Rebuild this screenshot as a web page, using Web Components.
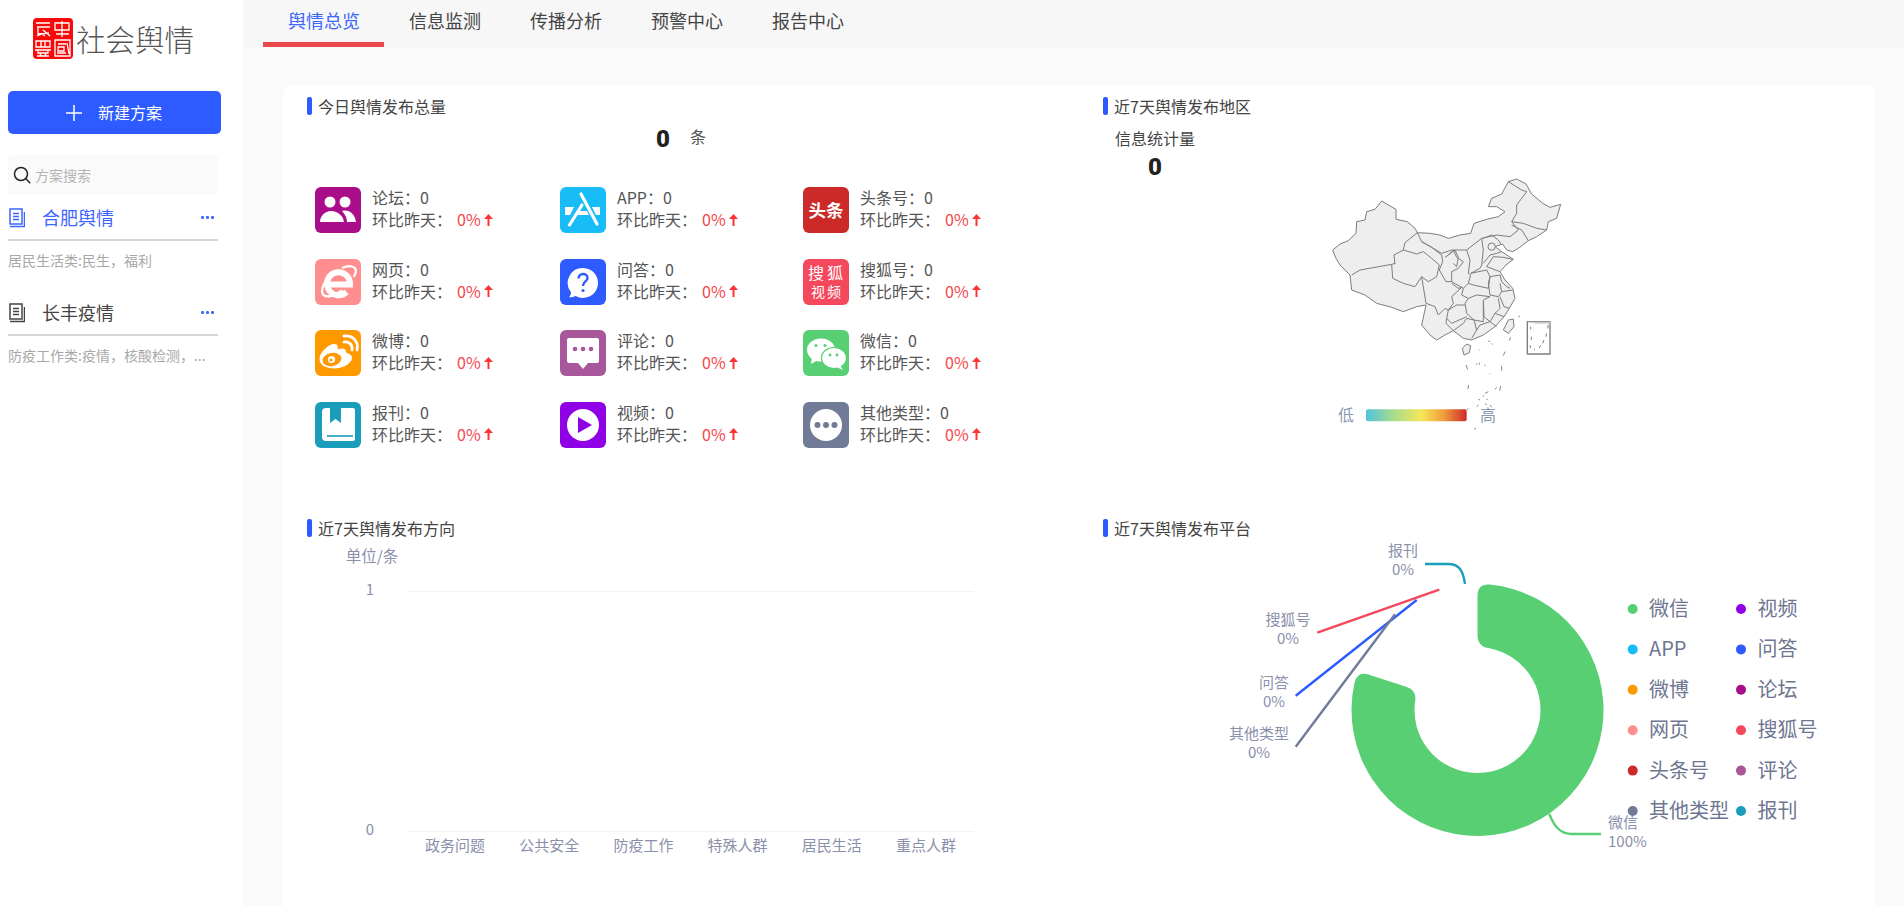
<!DOCTYPE html>
<html lang="zh-CN">
<head>
<meta charset="utf-8">
<title>社会舆情</title>
<style>
    html, body { margin: 0; height: 906px; overflow: hidden; background: #fafafa; }
    body { font-family: 'Noto Sans CJK SC', 'Noto Sans', sans-serif; color: #444; }
</style>
</head>
<body>
<opinion-app></opinion-app>

<script>
const ICONS = {
    forum: `<circle cx="15" cy="15" r="5.500" fill="#fff"/><circle cx="30" cy="15" r="5.500" fill="#fff"/><path d="M5 35c0-6 5-11 11-11s12 4 13 11z" fill="#fff"/><path d="M27 24c7-2 13 3 14 11h-9c0-4-2-8-5-11z" fill="#fff"/>`,
    app: `<path d="M5 20h9l-4 8H5zM32 20h8v8h-4zM18 24h9l2 4H16z" fill="#fff"/><path d="M21 7l16 30M22 18L9.500 38" fill="none" stroke="#fff" stroke-width="3.200" stroke-linecap="round"/>`,
    toutiao: `<text x="23" y="29.500" text-anchor="middle" font-size="17.500" font-weight="700" fill="#fff">头条</text>`,
    web: `<path d="M13 25.500H35A11.500 11.500 0 1 0 31.500 33" fill="none" stroke="#fff" stroke-width="6"/><path d="M17 14C10 20 5 31 8 35.500c3 4 12 1 19-4M27 9c7-3 12-2 13.500 1 1 2.500 0 5-2 8" fill="none" stroke="#fff" stroke-width="2.200"/>`,
    qa: `<path d="M23 9a15 15 0 1 1-7.500 28c-2 1-4 1.500-6.500 1.300 1.200-1.300 2-2.800 2-5A15 15 0 0 1 23 9z" fill="#fff"/><path d="M18.500 19.500c0-6 9-6 9-.5 0 3.500-4.500 3.500-4.500 8" fill="none" stroke="#2d5bff" stroke-width="2.400"/><circle cx="23" cy="31.500" r="1.600" fill="#2d5bff"/>`,
    sohu: `<text x="24" y="20" text-anchor="middle" font-size="16" letter-spacing="3" fill="#fff">搜狐</text><text x="24" y="38" text-anchor="middle" font-size="14" letter-spacing="2" fill="#fff">视频</text>`,
    weibo: `<path d="M4.500 29c0-7 9-15 15-15 3.500 0 3.500 3 3 5.500 5-2 9-1 8.500 3 4 1 6 3 6 5.500 0 5-9 10.500-17.500 10.500S4.500 35 4.500 29z" fill="#fff"/><ellipse cx="17" cy="29.500" rx="9.500" ry="6.500" fill="#ff9900" transform="rotate(-10 17 29.500)"/><circle cx="16.500" cy="29.500" r="3.600" fill="#fff"/><circle cx="16" cy="30" r="1.500" fill="#ff9900"/><path d="M29 12c5-1 9 3 8 8M29 6c9-1 15 6 13 14" fill="none" stroke="#fff" stroke-width="2.800" stroke-linecap="round"/>`,
    comment: `<path d="M9 8h28a2 2 0 0 1 2 2v21a2 2 0 0 1-2 2H28l-5 6-5-6H9a2 2 0 0 1-2-2V10a2 2 0 0 1 2-2z" fill="#fff"/><circle cx="15" cy="19" r="2.300" fill="#a9579b"/><circle cx="23" cy="19" r="2.300" fill="#a9579b"/><circle cx="31" cy="19" r="2.300" fill="#a9579b"/>`,
    wechat: `<ellipse cx="18" cy="20" rx="14" ry="11.500" fill="#fff"/><path d="M9 27l-1 7 7-4z" fill="#fff"/><ellipse cx="31" cy="28" rx="12.500" ry="10.500" fill="#fff" stroke="#58cf73" stroke-width="1.200"/><path d="M37 35l3 5-7-3z" fill="#fff"/><circle cx="13" cy="15.500" r="1.500" fill="#58cf73"/><circle cx="22" cy="15.500" r="1.500" fill="#58cf73"/><circle cx="27" cy="25" r="1.400" fill="#58cf73"/><circle cx="34" cy="25" r="1.400" fill="#58cf73"/>`,
    paper: `<path d="M11 6h27a2 2 0 0 1 2 2v29a2 2 0 0 1-2 2H11a4 4 0 0 1-4-4V10a4 4 0 0 1 4-4z" fill="#fff"/><path d="M15 6h11v15l-5.500-4-5.500 4z" fill="#1a9dbb"/><path d="M12 34h26" stroke="#1a9dbb" stroke-width="1.600"/>`,
    video: `<circle cx="23" cy="23" r="16" fill="#fff"/><path d="M18 15l14 8-14 8z" fill="#8f00e6"/>`,
    other: `<circle cx="23" cy="23" r="16" fill="#fff"/><circle cx="14.500" cy="23" r="3" fill="#717a96"/><circle cx="23" cy="23" r="3" fill="#717a96"/><circle cx="31.500" cy="23" r="3" fill="#717a96"/>`
};

class SideLogo extends HTMLElement {
    constructor() {
        super();
        this.attachShadow({ mode: 'open' });
        this.shadowRoot.innerHTML = `
            <style>
                :host { display: flex; align-items: center; padding: 18px 0 0 33px; height: 41px; }
                svg { flex: none; }
                span { margin-left: 3px; font-size: 29.500px; line-height: 41px; font-weight: 300; color: #555; white-space: nowrap; }
            </style>
            <svg width="40" height="41" viewBox="0 0 40 41">
                <rect width="40" height="41" rx="4" fill="#f80a0a"/>
                <g fill="none" stroke="#fff" stroke-width="1.300">
                    <path d="M3 5h14M4 9h13M5 9v7l11-1M4 18l5-2 3 2M10 12l7 6"/>
                    <path d="M22 5h14v7H22zM29 3v16M23 16h13"/>
                    <path d="M3 23h14v6H3zM8 23v6M12 23v6M2 32h16M5 32v3h10v-3M4 38h12M7 35l1 3M13 35l-1 3"/>
                    <path d="M22 22h15v16H22zM25 26h8M25 29h6v4h-6zM34 25l2 11M24 35h9"/>
                </g>
            </svg>
            <span>社会舆情</span>`;
    }
}

class NewPlanButton extends HTMLElement {
    constructor() {
        super();
        this.attachShadow({ mode: 'open' });
        this.shadowRoot.innerHTML = `
            <style>
                :host {
                    display: flex; align-items: center; box-sizing: border-box;
                    margin: 32px 22px 0 8px; height: 43px; padding-left: 58px;
                    background: #2d5bff; border-radius: 5px; color: #fff;
                    font-size: 16px; cursor: pointer;
                }
                svg { margin-right: 16px; }
                span { margin-top: -2px; }
            </style>
            <svg width="16" height="16" viewBox="0 0 16 16"><path d="M8 0v16M0 8h16" stroke="#fff" stroke-width="1.500"/></svg>
            <span>新建方案</span>`;
    }
}

class PlanSearch extends HTMLElement {
    constructor() {
        super();
        this.attachShadow({ mode: 'open' });
        this.shadowRoot.innerHTML = `
            <style>
                :host {
                    display: flex; align-items: center; box-sizing: border-box;
                    margin: 21px 25px 0 8px; height: 40px; padding-left: 5px;
                    background: #fafafa; border-radius: 4px;
                    font-size: 14px; color: #b5b5b5;
                }
                svg { margin-right: 4px; }
                span { margin-top: -1px; }
            </style>
            <svg width="18" height="18" viewBox="0 0 18 18" fill="none" stroke="#222" stroke-width="1.500">
                <circle cx="8" cy="8" r="6.500"/><path d="M12.800 12.800l4 4" stroke-linecap="round"/>
            </svg>
            <span>方案搜索</span>`;
    }
}

class PlanItem extends HTMLElement {
    constructor() {
        super();
        this.attachShadow({ mode: 'open' });
    }

    connectedCallback() {
        const name = this.getAttribute('name');
        const desc = this.getAttribute('desc');
        const color = this.hasAttribute('active') ? '#3d66ff' : '#444';
        this.shadowRoot.innerHTML = `
            <style>
                :host { display: block; margin: 0 25px 0 8px; }
                .head {
                    display: flex; align-items: center; height: 43px;
                    border-bottom: 2px solid #d6d6d6; box-sizing: content-box;
                    color: ${color}; font-size: 18px;
                }
                svg { flex: none; margin: 0 17px 0 1px; }
                .name { flex: 1; margin-top: -2px; }
                .more { width: 13px; margin-right: 4px; display: flex; gap: 2.500px; }
                .more i { width: 2.500px; height: 2.500px; background: #3d66ff; border-radius: 50%; }
                .desc { margin-top: 9px; height: 20px; line-height: 20px; font-size: 14px; color: #a8a8a8; white-space: nowrap; }
            </style>
            <div class="head">
                <svg width="16" height="20" viewBox="0 0 16 20" fill="none" stroke="${color}" stroke-width="1.500">
                    <path d="M1 1h12v15H1zM4 5.500h6M4 8.500h6M4 11.500h6M1 18.500h14.500V4"/>
                </svg>
                <span class="name">${name}</span>
                <span class="more"><i></i><i></i><i></i></span>
            </div>
            <div class="desc">${desc}</div>`;
    }
}

class SideBar extends HTMLElement {
    constructor() {
        super();
        this.attachShadow({ mode: 'open' });
        this.shadowRoot.innerHTML = `
            <style>
                :host {
                    display: block; flex: none; width: 243px; height: 906px;
                    background: #fff; box-shadow: 2px 0 6px rgba(0, 0, 0, .05);
                }
                .plans { margin-top: 1px; }
                plan-item + plan-item { margin-top: 21px; }
            </style>
            <side-logo></side-logo>
            <new-plan-button></new-plan-button>
            <plan-search></plan-search>
            <div class="plans">
                <plan-item active name="合肥舆情" desc="居民生活类:民生，福利"></plan-item>
                <plan-item name="长丰疫情" desc="防疫工作类:疫情，核酸检测，..."></plan-item>
            </div>`;
    }
}

class TopTabs extends HTMLElement {
    constructor() {
        super();
        this.attachShadow({ mode: 'open' });
        const tabs = ['舆情总览', '信息监测', '传播分析', '预警中心', '报告中心'];
        this.shadowRoot.innerHTML = `
            <style>
                :host { display: flex; height: 47px; padding-left: 20px; background: #f7f7f7; }
                div {
                    box-sizing: border-box; width: 121px; height: 47px; text-align: center;
                    font-size: 18px; line-height: 41px; color: #444; padding-left: 1px;
                }
                .on { color: #3d66ff; border-bottom: 5px solid #e9494d; line-height: 40px; padding-left: 1px; }
            </style>
            ${tabs.map((t, i) => `<div class="${i === 0 ? 'on' : ''}">${t}</div>`).join('')}`;
    }
}

class PanelBox extends HTMLElement {
    constructor() {
        super();
        this.attachShadow({ mode: 'open' });
    }

    connectedCallback() {
        this.shadowRoot.innerHTML = `
            <style>
                :host { display: block; box-sizing: border-box; height: 422px; padding-top: 12px; }
                .title {
                    display: flex; align-items: center; height: 18px; padding-left: 24px;
                    font-size: 16px; color: #444; white-space: nowrap;
                }
                .title i { width: 5px; height: 18px; margin-right: 6px; background: #2d5bff; border-radius: 2px; }
                .title span { margin-top: -1px; }
            </style>
            <div class="title"><i></i><span>${this.getAttribute('title')}</span></div>
            <slot></slot>`;
    }
}

class StatItem extends HTMLElement {
    constructor() {
        super();
        this.attachShadow({ mode: 'open' });
    }

    connectedCallback() {
        const icon = this.getAttribute('icon');
        this.shadowRoot.innerHTML = `
            <style>
                :host { display: flex; align-items: center; gap: 11px; height: 46px; }
                svg.ico { flex: none; width: 46px; height: 46px; }
                .txt { font-size: 16px; line-height: 22px; color: #555; white-space: nowrap; margin-top: -4px; }
                .rate { display: flex; align-items: center; }
                .pct { margin-left: 5px; color: #f4484d; }
                .rate svg { margin-left: 3px; margin-top: 1px; }
            </style>
            <svg class="ico" viewBox="0 0 46 46">
                <rect width="46" height="46" rx="6" fill="${this.getAttribute('color')}"/>
                ${ICONS[icon]}
            </svg>
            <div class="txt">
                <div>${this.getAttribute('label')}：0</div>
                <div class="rate"><span>环比昨天：</span><span class="pct">0%</span>
                    <svg width="9" height="12" viewBox="0 0 9 12"><path d="M4.500 12V3" stroke="#f33" stroke-width="2"/><path d="M4.500 0L9 5H0z" fill="#f33"/></svg>
                </div>
            </div>`;
    }
}

class TodayTotal extends HTMLElement {
    constructor() {
        super();
        this.attachShadow({ mode: 'open' });
        const items = [
            ['论坛', 'forum', '#a90d8a'], ['APP', 'app', '#18bdf7'], ['头条号', 'toutiao', '#cc2929'],
            ['网页', 'web', '#ff8f8f'], ['问答', 'qa', '#2d5bff'], ['搜狐号', 'sohu', '#f4485c'],
            ['微博', 'weibo', '#ff9900'], ['评论', 'comment', '#a9579b'], ['微信', 'wechat', '#58cf73'],
            ['报刊', 'paper', '#1a9dbb'], ['视频', 'video', '#8f00e6'], ['其他类型', 'other', '#717a96']
        ];
        this.shadowRoot.innerHTML = `
            <style>
                :host { display: block; }
                .total { display: flex; align-items: center; height: 24px; margin-top: 12px; padding-left: 373px; }
                .total b { width: 34px; font: 900 24px/24px Roboto, sans-serif; color: #222; }
                .total span { font-size: 16px; line-height: 20px; color: #555; margin-top: -6px; }
                .grid {
                    display: grid; grid-template-columns: 245px 243px 1fr; row-gap: 25.600px;
                    margin-top: 36px; padding-left: 32px;
                }
            </style>
            <div class="total"><b>0</b><span>条</span></div>
            <div class="grid">
                ${items.map(([label, icon, color]) => `<stat-item label="${label}" icon="${icon}" color="${color}"></stat-item>`).join('')}
            </div>`;
    }
}

class RegionMap extends HTMLElement {
    constructor() {
        super();
        this.attachShadow({ mode: 'open' });
        const lines = [
            'M95 315L120 300 165 292 215 283 225 280', 'M225 283L222 255 250 240 255 218 292 188',
            'M215 283L218 325 250 340 285 350 305 320 325 335 350 320 358 285 335 265 310 245 290 252 250 240',
            'M292 188L305 215 335 232 365 255 368 275 358 300 378 335 395 335 395 305 415 295 430 275 410 262 400 240 385 255 375 262',
            'M305 215L335 232 365 250 395 240 440 240 485 205 530 195 570 200 595 180 575 155 590 130 590 105 620 65 605 60 565 35',
            'M385 255L405 240 415 262 410 290 400 280', 'M440 240L450 270 445 310 452 315 445 340 430 355 395 335',
            'M485 205L490 240 485 285 480 295 452 310', 'M490 205L515 195 535 210 545 225', 'M490 280L510 255 530 250 545 245',
            'M500 290L520 260 550 262 578 268', 'M500 290L540 305', 'M452 310L500 300 510 320 505 355 460 345 445 340',
            'M510 320L540 315 545 335 560 350 570 355', 'M510 320L505 340 510 375 535 380 545 365 540 340',
            'M430 355L425 375 445 385 470 375 510 380', 'M545 365L578 360', 'M540 380L552 410 568 415',
            'M510 380L490 390 492 440 510 455 525 430 540 415 535 385', 'M525 430L552 440', 'M510 455L530 470',
            'M445 385L435 400 440 430 462 450 490 455 490 395', 'M462 450L470 480 480 465 510 455', 'M400 482L430 460 440 445 462 450',
            'M470 480L455 505', 'M385 420L410 405 435 405', 'M385 420L380 445 395 460 440 440',
            'M395 340L415 355 425 352 395 380 400 400 385 420', 'M318 400L345 410 355 435 375 415 385 420',
            'M380 445L378 460 400 482', 'M305 320L318 400', 'M575 155L610 160 650 175 680 180', 'M575 165L605 180 625 212'
        ];
        const dashes = [
            [438, 585, 443, 598], [545, 588, 545, 602], [446, 645, 444, 657], [542, 648, 539, 662],
            [555, 545, 550, 557], [572, 502, 568, 512], [468, 775, 462, 778], [510, 610, 510, 612],
            [470, 580, 470, 584], [478, 578, 478, 584], [492, 586, 496, 586], [500, 690, 503, 686],
            [488, 680, 492, 676], [470, 710, 476, 705], [495, 670, 505, 665], [525, 658, 530, 652],
            [445, 715, 440, 720], [496, 700, 500, 705], [475, 688, 480, 690], [510, 705, 515, 712],
            [515, 520, 518, 524], [505, 513, 510, 515], [595, 440, 600, 438], [478, 540, 480, 542]
        ];
        const stops = ['#4fc3dc', '#a8dd8c', '#f7e659', '#ef9a3c', '#d0282a'];
        this.shadowRoot.innerHTML = `
            <style>
                :host { display: block; }
                svg { display: block; }
                text { font-family: inherit; }
            </style>
            <svg width="796" height="380" viewBox="0 0 2388 1140">
                <defs>
                    <linearGradient id="scale">
                        <stop offset="0" stop-color="${stops[0]}"/><stop offset=".28" stop-color="${stops[1]}"/>
                        <stop offset=".55" stop-color="${stops[2]}"/><stop offset=".78" stop-color="${stops[3]}"/>
                        <stop offset="1" stop-color="${stops[4]}"/>
                    </linearGradient>
                </defs>
                <g transform="translate(723 144)" fill="#eee" stroke="#7d7d7d" stroke-width="3" stroke-linejoin="round">
                    <path d="M38 240L60 222 85 212 108 190 110 155 135 150 140 125 165 118 185 93 205 105 228 118 228 148 262 155 285 175 292 188 330 190 360 195 385 205 420 195 452 190 462 160 500 148 535 140 555 125 530 110 505 110 515 85 545 72 565 35 590 27 618 42 635 72 668 100 690 112 722 103 710 145 685 155 680 180 650 200 625 212 595 235 578 245 560 240 548 222 525 230 545 245 580 268 558 285 540 305 555 330 578 355 585 385 568 415 552 440 525 470 490 495 455 510 430 505 400 482 375 495 350 510 330 495 305 465 318 405 290 410 250 425 215 412 170 400 135 375 95 360 90 315 60 285 48 265Z"/>
                    <g fill="none">${lines.map(d => `<path d="${d}"/>`).join('')}</g>
                    <circle cx="515" cy="230" r="11" fill="#eee"/>
                    <path d="M550 480L565 450 580 447 582 470 565 490Z"/>
                    <path d="M427 535L440 522 452 527 448 548 432 555Z"/>
                    <rect x="622" y="455" width="68" height="97" fill="#fff" stroke-width="4"/>
                    <path d="M622 455h68v6h-40z" stroke="none" fill="#ccc"/>
                    <path d="M632 470v8M634 500v10M630 526l2 8M684 465v10M680 490l-3 10M672 510l-4 10M662 526l-4 8M645 538l-3 2" fill="none" stroke-width="3"/>
                    <g stroke-width="3" stroke="#888" fill="none">${dashes.map(([a, b, c, d]) => `<path d="M${a} ${b}L${c} ${d}"/>`).join('')}</g>
                </g>
                <text x="777" y="896" font-size="48" fill="#8a9ab5">低</text>
                <rect x="861" y="862" width="302" height="36" rx="6" fill="url(#scale)"/>
                <text x="1203" y="896" font-size="48" fill="#8a9ab5">高</text>
            </svg>`;
    }
}

class RegionPanel extends HTMLElement {
    constructor() {
        super();
        this.attachShadow({ mode: 'open' });
        this.shadowRoot.innerHTML = `
            <style>
                :host { display: grid; }
                region-map, .stat { grid-area: 1 / 1; }
                .stat { margin: 13px 0 0 36px; width: 80px; text-align: center; font-size: 16px; line-height: 20px; color: #444; }
                .stat b { display: block; margin-top: 7px; font: 900 24px/24px Roboto, sans-serif; color: #222; }
                region-map { margin-top: 7px; }
            </style>
            <region-map></region-map>
            <div class="stat">信息统计量<b>0</b></div>`;
    }
}

class DirectionChart extends HTMLElement {
    constructor() {
        super();
        this.attachShadow({ mode: 'open' });
        const cats = ['政务问题', '公共安全', '防疫工作', '特殊人群', '居民生活', '重点人群'];
        this.shadowRoot.innerHTML = `
            <style>
                :host { display: block; padding-top: 3px; }
                svg { display: block; }
                text { font-family: inherit; fill: #8a90ab; }
            </style>
            <svg width="796" height="366" viewBox="283 540 796 366">
                <text x="372" y="562" text-anchor="middle" font-size="15.500">单位/条</text>
                <text x="370" y="595" text-anchor="middle" font-size="15">1</text>
                <text x="370" y="835" text-anchor="middle" font-size="15">0</text>
                <path d="M408 591.500H974M408 831.500H974" stroke="#f2f2f2"/>
                ${cats.map((c, i) => `<text x="${455 + i * 94.2}" y="851" text-anchor="middle" font-size="15">${c}</text>`).join('')}
            </svg>`;
    }
}

class PlatformChart extends HTMLElement {
    constructor() {
        super();
        this.attachShadow({ mode: 'open' });
        const legend = [
            ['微信', '#58cf73', '视频', '#8f00e6'], ['APP', '#18bdf7', '问答', '#2d5bff'],
            ['微博', '#ff9900', '论坛', '#a90d8a'], ['网页', '#ff8f8f', '搜狐号', '#f4485c'],
            ['头条号', '#cc2929', '评论', '#a9579b'], ['其他类型', '#717a96', '报刊', '#1a9dbb']
        ];
        const labels = [
            ['报刊', 1403, 556], ['搜狐号', 1288, 625], ['问答', 1274, 688], ['其他类型', 1259, 739]
        ];
        this.shadowRoot.innerHTML = `
            <style>
                :host { display: block; padding-top: 3px; }
                svg { display: block; }
                text { font-family: inherit; }
                .lbl { fill: #8b90ad; font-size: 15px; }
                .leg { fill: #6e7691; font-size: 20px; }
            </style>
            <svg width="796" height="366" viewBox="1079 540 796 366">
                <path d="${this.ring(1477.500, 710, 126, 63, 0, 288, 12)}" fill="#58cf73"/>
                <g fill="none" stroke-width="2.400">
                    <path d="M1465 584C1463 570 1459 564 1448 564H1425" stroke="#1a9dbb"/>
                    <path d="M1439.300 589.700L1317.300 632.700" stroke="#f4485c"/>
                    <path d="M1416.700 600L1295.700 695.700" stroke="#2d5bff"/>
                    <path d="M1395 614.300L1295.700 746.700" stroke="#717a96"/>
                    <path d="M1549.300 814C1554 826 1560 834 1572 834H1601" stroke="#58cf73"/>
                </g>
                ${legend.map(([a, ca, b, cb], i) => {
                    const y = 609 + i * 40.400;
                    return `<circle cx="1632.700" cy="${y}" r="5" fill="${ca}"/>
                        <text class="leg" x="1649" y="${y + 7}">${a}</text>
                        <circle cx="1741" cy="${y}" r="5" fill="${cb}"/>
                        <text class="leg" x="1757.500" y="${y + 7}">${b}</text>`;
                }).join('')}
                ${labels.map(([t, x, y]) => `<text class="lbl" x="${x}" y="${y}" text-anchor="middle">${t}</text>
                    <text class="lbl" x="${x}" y="${y + 19}" text-anchor="middle">0%</text>`).join('')}
                <text class="lbl" x="1608" y="828">微信</text>
                <text class="lbl" x="1608" y="847">100%</text>
            </svg>`;
    }

    // donut slice with rounded corners, angles in degrees clockwise from the top
    ring(cx, cy, R, r, a0, a1, c) {
        const pt = (rad, deg) => {
            const t = deg * Math.PI / 180;
            return `${(cx + rad * Math.sin(t)).toFixed(2)} ${(cy - rad * Math.cos(t)).toFixed(2)}`;
        };
        const dO = c / R * 180 / Math.PI;
        const dI = c / r * 180 / Math.PI;
        return `M${pt(R - c, a0)}Q${pt(R, a0)} ${pt(R, a0 + dO)}`
            + `A${R} ${R} 0 1 1 ${pt(R, a1 - dO)}Q${pt(R, a1)} ${pt(R - c, a1)}`
            + `L${pt(r + c, a1)}Q${pt(r, a1)} ${pt(r, a1 - dI)}`
            + `A${r} ${r} 0 1 0 ${pt(r, a0 + dI)}Q${pt(r, a0)} ${pt(r + c, a0)}Z`;
    }
}

class OpinionApp extends HTMLElement {
    constructor() {
        super();
        this.attachShadow({ mode: 'open' });
        this.shadowRoot.innerHTML = `
            <style>
                :host { display: flex; height: 906px; overflow: hidden; }
                main { flex: 1; min-width: 0; background: #fafafa; }
                .card {
                    display: grid; grid-template-columns: 796px 796px; grid-auto-rows: 422px;
                    width: 1592px; margin: 38px 0 0 40px; background: #fff; border-radius: 8px;
                }
            </style>
            <side-bar></side-bar>
            <main>
                <top-tabs></top-tabs>
                <div class="card">
                    <panel-box title="今日舆情发布总量"><today-total></today-total></panel-box>
                    <panel-box title="近7天舆情发布地区"><region-panel></region-panel></panel-box>
                    <panel-box title="近7天舆情发布方向"><direction-chart></direction-chart></panel-box>
                    <panel-box title="近7天舆情发布平台"><platform-chart></platform-chart></panel-box>
                </div>
            </main>`;
    }
}

customElements.define('side-logo', SideLogo);
customElements.define('new-plan-button', NewPlanButton);
customElements.define('plan-search', PlanSearch);
customElements.define('plan-item', PlanItem);
customElements.define('side-bar', SideBar);
customElements.define('top-tabs', TopTabs);
customElements.define('panel-box', PanelBox);
customElements.define('stat-item', StatItem);
customElements.define('today-total', TodayTotal);
customElements.define('region-map', RegionMap);
customElements.define('region-panel', RegionPanel);
customElements.define('direction-chart', DirectionChart);
customElements.define('platform-chart', PlatformChart);
customElements.define('opinion-app', OpinionApp);
</script>
</body>
</html>
